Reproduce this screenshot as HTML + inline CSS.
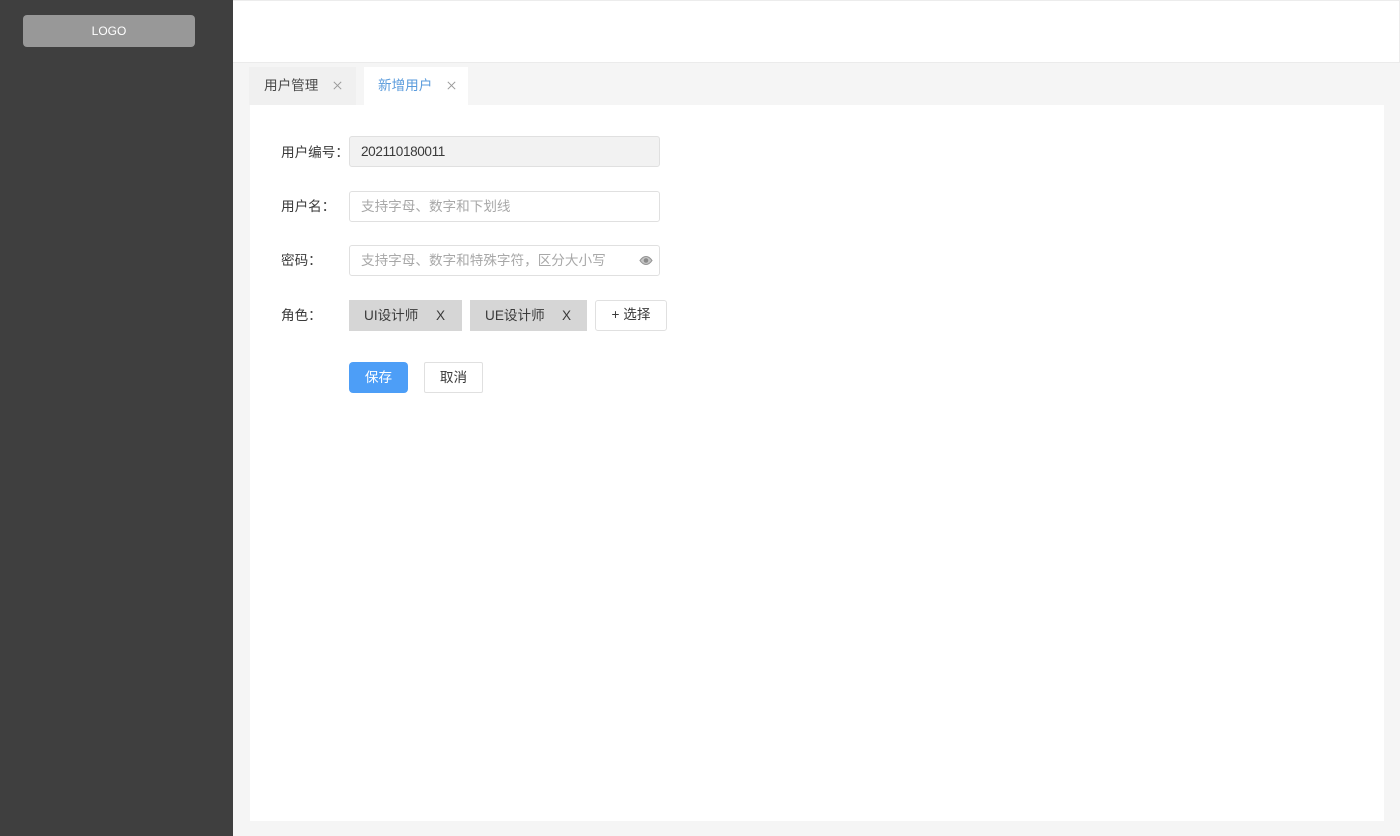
<!DOCTYPE html>
<html lang="zh">
<head>
<meta charset="utf-8">
<title>新增用户</title>
<style>
html,body{margin:0;padding:0;width:1400px;height:836px;overflow:hidden;background:#f5f5f5;font-family:"Liberation Sans","Noto Sans CJK SC",sans-serif;color:#3a3a3a;}
.a{position:absolute;box-sizing:border-box;white-space:nowrap;}
.t{font-size:13.6px;line-height:20px;}
.inp{left:349px;width:311px;height:31px;border:1px solid #e0e0e0;border-radius:3px;background:#fff;padding-left:11px;font-size:13.6px;line-height:29px;color:#a8a8a8;}
.tag{background:#d6d6d6;height:31px;top:300px;font-size:13.6px;line-height:31px;color:#3a3a3a;}
</style>
</head>
<body>
<div class="a" style="left:0;top:0;width:233px;height:836px;background:#3f3f3f;"></div>
<div class="a" style="left:23px;top:15px;width:172px;height:32px;background:#989898;border-radius:4px;color:#fff;font-size:12px;line-height:32px;text-align:center;">LOGO</div>

<div class="a" style="left:233px;top:0;width:1167px;height:63px;background:#fff;border-top:1px solid #ececec;border-bottom:1px solid #ebebeb;border-right:1px solid #ececec;"></div>

<div class="a" style="left:249px;top:67px;width:107px;height:38px;background:#f0f0f0;"></div>
<div class="a t" style="left:264px;top:76px;color:#4a4a4a;">用户管理</div>
<svg class="a" style="left:332.500px;top:81px;" width="9" height="9" viewBox="0 0 9 9"><path d="M.8.8l7.400 7.400M8.200.8L.8 8.200" stroke="#999" stroke-width="1" fill="none"/></svg>

<div class="a" style="left:364px;top:67px;width:104px;height:38px;background:#fff;"></div>
<div class="a t" style="left:378px;top:76px;color:#5a9bdc;">新增用户</div>
<svg class="a" style="left:446.500px;top:81px;" width="9" height="9" viewBox="0 0 9 9"><path d="M.8.8l7.400 7.400M8.200.8L.8 8.200" stroke="#999" stroke-width="1" fill="none"/></svg>

<div class="a" style="left:250px;top:105px;width:1134px;height:716px;background:#fff;"></div>

<div class="a t" style="left:281px;top:143px;">用户编号：</div>
<div class="a inp" style="top:136px;background:#f2f2f2;color:#3a3a3a;letter-spacing:-.4px;line-height:30px;">202110180011</div>

<div class="a t" style="left:281px;top:197px;">用户名：</div>
<div class="a inp" style="top:191px;">支持字母、数字和下划线</div>

<div class="a t" style="left:281px;top:251px;">密码：</div>
<div class="a inp" style="top:245px;">支持字母、数字和特殊字符，区分大小写</div>
<svg class="a" style="left:639px;top:255px;" width="14" height="11" viewBox="0 0 14 11"><path d="M1 5.500C3 2.600 5 1.500 7 1.500s4 1.100 6 4c-2 2.900-4 4-6 4s-4-1.100-6-4z" fill="#c4c4c4" stroke="#939393" stroke-width="1.100"/><circle cx="7" cy="5.500" r="2.300" fill="#8a8a8a"/></svg>

<div class="a t" style="left:281px;top:306px;">角色：</div>
<div class="a tag" style="left:349px;width:113px;"><span class="a" style="left:15px;">UI设计师</span><span class="a" style="left:87px;">X</span></div>
<div class="a tag" style="left:470px;width:117px;"><span class="a" style="left:15px;">UE设计师</span><span class="a" style="left:92px;">X</span></div>
<div class="a" style="left:595px;top:300px;width:72px;height:31px;border:1px solid #e0e0e0;border-radius:3px;background:#fff;font-size:13.6px;line-height:28px;text-align:center;color:#3a3a3a;">+ 选择</div>

<div class="a" style="left:349px;top:362px;width:59px;height:31px;border-radius:4px;background:#4d9ef7;color:#fff;font-size:13.6px;line-height:31px;text-align:center;">保存</div>
<div class="a" style="left:424px;top:362px;width:59px;height:31px;border:1px solid #e0e0e0;border-radius:2px;background:#fff;color:#3a3a3a;font-size:13.6px;line-height:29px;text-align:center;">取消</div>
</body>
</html>
